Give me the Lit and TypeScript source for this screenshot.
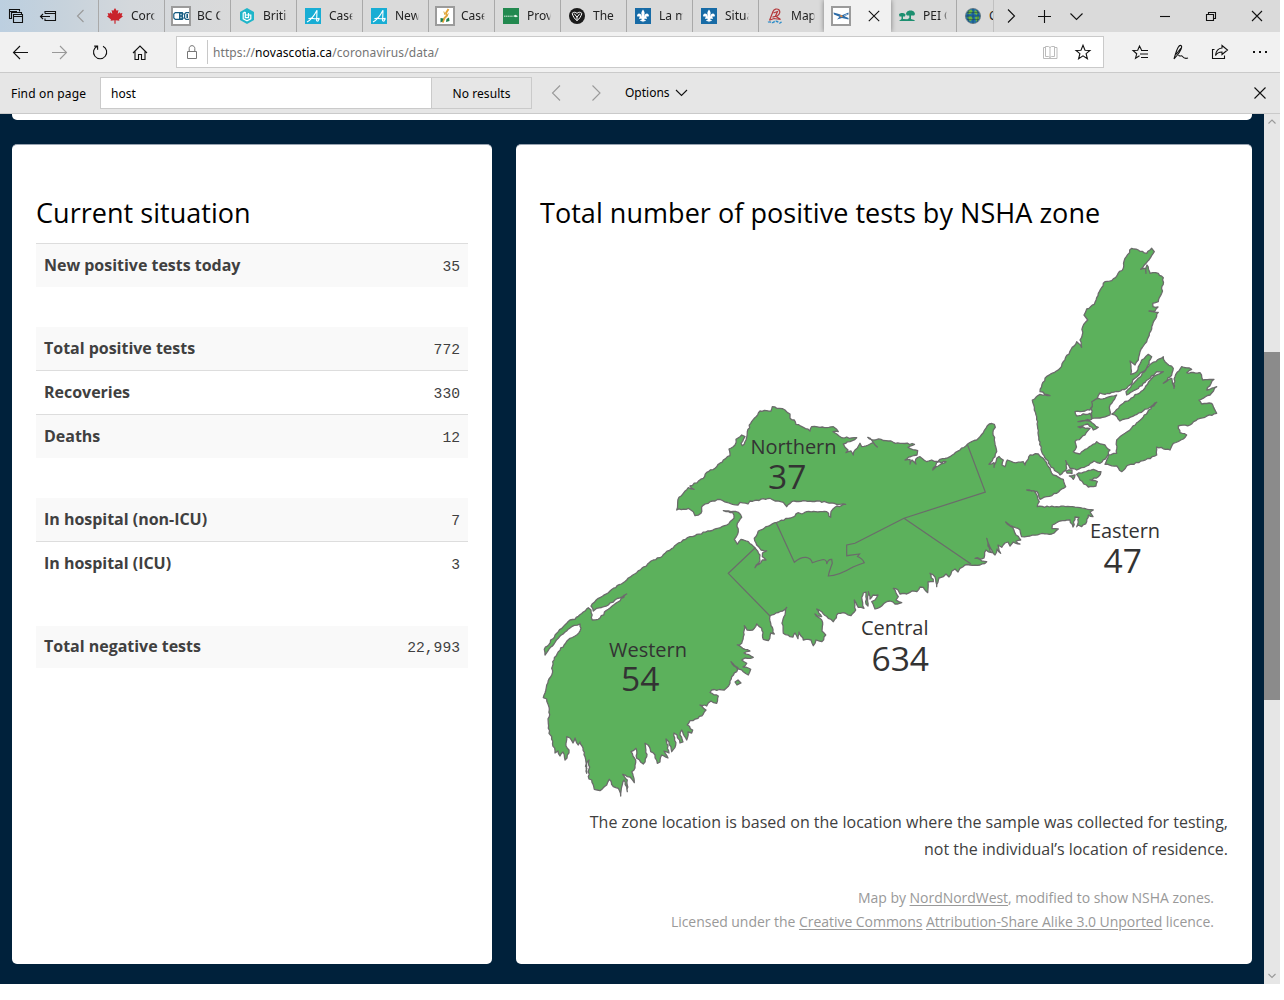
import { LitElement, html, svg, css, TemplateResult } from "lit";
import { customElement } from "lit/decorators.js";

type Pt = [number, number];

const parse = (s: string): Pt[] =>
  s.trim().split(/\s+/).map((p) => p.split(",").map(Number) as Pt);

/* Small deterministic displacement that gives the coast its ragged edge. */
function coast(src: string, seed: number): string {
  let s = seed;
  const rnd = () => {
    s = (s * 1103515245 + 12345) % 2147483648;
    return s / 2147483648 - 0.5;
  };
  const pts = parse(src);
  const out: Pt[] = [];
  pts.forEach((a, i) => {
    const b = pts[(i + 1) % pts.length];
    out.push(a);
    const dx = b[0] - a[0];
    const dy = b[1] - a[1];
    const len = Math.hypot(dx, dy);
    const n = Math.floor(len / 2.2);
    for (let k = 1; k < n; k++) {
      const t = k / n;
      const d = rnd() * 1.5;
      out.push([a[0] + dx * t - (dy / len) * d, a[1] + dy * t + (dx / len) * d]);
    }
  });
  return "M" + out.map((p) => p[0].toFixed(1) + " " + p[1].toFixed(1)).join("L") + "Z";
}

const MAINLAND = `676.7,510 679,497.3 683.3,493.3 688.3,487.7 694,489.3 690,486 703.3,478.3 706.7,472.3 715,468.3 723.3,460
730,455.7 729,449 735,445 736,439.3 741.7,435 745,436.7 741,443.3 742.3,445.7 746,440 747.3,431.7 750.7,423.3 760,411 771,411 772.3,406.7
776.7,408.3 785,410 790,414 790,418.3 794.3,420 796,424.3 803.3,427.3 810,431 811.7,426.7 820,427.3 833.3,426.7 836.7,429.3 838.3,431.7
833,431.7 836.7,434 841.7,437.7 856.7,437.7 850,441.7 843.3,444 845,447.3 848,450 846,452.7 851,451 853.3,455 855,450 860,443.3 861.7,446.7
868.3,445 873.3,442.7 877.3,447 872,440.7 867.7,437.3 871.7,439.7 881,439.3 893.3,442.3 900,443.3 914.5,444.3 908,447.3 917.7,450.7 917,455
911,456.5 905,460 910,459.5 910,464 912,460 916,464 915.7,459.3 920,456.7 926.7,461.7 931.7,460 937,461.5 932.7,470 938.3,466 946,461.7
937,462.5 940,459.3 950,456.7 960,450 967.3,444.3 976.7,440 983.3,432.7 989.3,424 994.3,424.3 995.3,427.3 993.3,430 994.3,440 996.7,451.7
995,456.7 989,464.3 994,462.5 994,467.3 996.7,458.3 999,456.5 1003.3,460 1002,465 1005,466.7 1007.3,460 1013.3,462.3 1023.3,461.7 1025,465 1030,455
1038.3,454 1043.3,458.3 1050,468.3 1053.3,475 1063.3,479.3 1065.7,486.7 1056.7,493.3 1046.7,496.7 1040,499.3 1037,491.5 1026.7,490 1034,490.7
1037.3,496 1039.3,501.7 1037.3,506.7 1056.7,506.7 1070,506.7 1080,507.7 1093.3,510 1090,512 1093,516.7 1088.3,515 1086.7,521.7 1081.7,526.7 1078,525 1076.7,526.7
1079,517.3 1075,517 1073,527 1070,520 1060,521 1052.3,525 1052,528.5 1058.3,529 1051.7,534 1040,534 1030,536 1021.7,536.7 1020,530 1013,526.7
1005.7,522 1012.7,527.5 1016,535 1020.7,540 1016,541 1020,544 1013.3,542 1010,546 1008,542 1005,543 1001.7,547.3 998,545 1000.7,553.3 997,549 995,555 990,547 986.7,538.3
988,546 991.7,552.7 986,550 984,558 975,558.3 986.7,561.7 980,565 970,565 965,565 960,568.3 958,572 955,569 951.7,571.3 949,577 946,574 943.3,576.7 939,578 936.7,586.7
935,577 930,573.3 933.3,581.7 928,582 927.7,592.7 923.3,587.3 920,587 916.7,591.7 912,591 906.7,594 900,594 898,590 893.3,588.3 898.3,596.7
896,600 901.7,602.7 895,604 890,601 886.7,601.7 881.7,606 875,609 871.7,601.7 875,600 878,595 873,595 870,599 868.3,591.7 868,606 866,604 866,592 863.3,593 862,600 864,608.3
858.3,607.3 854.3,600 855.7,610 851,615.7 845,613 838.3,613.3 833.3,621.7 828.3,618.3 821.7,611.7 816.7,609 821.7,616.7 815,614 821.7,620 822.3,626.7 822,631 825.7,635
821.7,641.7 816,640 813.3,645.7 811,640 803.3,640 799,632 798,638.7 795,633 793,637 790,636.7 783.3,633.3 782,623.3 785,615 786.7,607.3 782.7,611
770,616 770.7,623.3 774.3,634 770.7,633 768.3,640.7 763.3,639.3 761.7,628.3 756.7,624 752.7,630 747,630 744.3,625.7 743.3,636.7 741.7,643.3
737.3,645 742.7,648.3 750,651 744,653 753.3,657.3 745,658 741.7,660 746.7,663.3 743,667 750.7,669.3 748.3,675 743.3,671.7 737.3,667.3
731,661.7 737.7,669.3 731.7,676.7 730,683.3 724.3,690 711.7,690 710,692.5 718.3,696 716.7,703.3 711,701 706.7,706 700,705 706,710 703.3,714
698,718.3 690,720.7 687.3,725 692.7,730 691.7,733 688,732 686.7,740 681.7,730 680,735 683,742 680,743 677,735 674,733 675.7,745 671.7,751.7 669,742
666,739 669,753 664,751 668,758 661.7,755 660,762 657.3,763.3 655,755 650.7,751.7 648,745 645,743.3 646.7,756.7 643.3,764 636.7,758.3 636,748.3
631,751.7 635.7,760 635,768 631.7,771.7 634.3,782.7 630,777 622.7,774.3 627.3,780 627.3,791.7 624,780 621.7,786.7 620.7,796 618.3,788.3
613.3,786.7 609.3,779.3 606.7,785 600,790.7 594.3,789.3 591.7,780 589,779 589,760 587,762 586.7,773.3 585,756.7 583,748 580,742 578.3,745 575,738 573,743
570,738 566.7,736.7 566,746 569,750 567,758 565,760 563,752 560,756 558,751 555,753 551.7,736.7 549,733.3 548.3,723.3 549.3,710 546.7,699 543.3,697.7
546.7,685 551.7,675 552.7,661.7 558.3,651.7 570,638.3 576.7,635 581,628.3 580,624 571.7,626.7 558.3,638.3 545,655 544.3,649.3 556.7,633.3
570,620 575,619.3 588.3,607.7 591,610 592.3,620 598.3,619.3 608.3,609.3 618.3,601.7 626.7,594 615,600 608.3,605 596.7,608.3 593.3,611
591,606 598.3,598.3 610,591 626.7,580 636.7,572.7 653.3,560 660,557.7 676.7,544.3 690,536.7 710,531 726.7,525 734,518.3 732.7,512.7
723.3,510.7 738.3,512.3 741.7,517.3 737.3,523.3 738.3,531.7 734.3,539.3 737.3,544.3 741,539.3 748.3,541.7 755,547.7 760,555 760,561
755,567.7 762.3,560 766,560 762.3,556.7 762.5,553 766.7,551 761,550 756.7,545 754.3,538.3 758.3,531 776.7,522.3 788.3,518.3 795,516 798,512.7
802,514 806.7,511.7 826.7,511.7 830.7,517.3 831,511.7 835,507.3 845.7,504.3 836.7,504.3 826.7,502.3 816.7,501 803.3,500.7 791.7,501.7
786.7,506.7 783.3,502.3 775,501 770,498.3 750,501 748,504 740,502.3 738,505 730,503.3 720,499.3 710,501.7 701.7,506.7 701,513.3 695,515.7 693.3,511.7
688.3,508.3`;

const CAPE_WEST = `1131.7,248.3 1138.3,250 1146.7,253.3 1151.7,248.3 1154.3,251.7 1146,263.3 1140.7,269.3 1146,268.3 1146,273.3
1147,265 1150,273.3 1158.3,273.3 1163.3,277.7 1161.7,293.3 1158.3,301.7 1152.7,303.3 1153,306.7 1158,307 1155,311 1149,311 1158.3,312.3
1151.7,326.7 1146.7,341.7 1140,351.7 1138.3,360 1135,365 1130,361 1131,368.3 1130.7,374.3 1136.7,371.7 1141.7,360 1148.3,354.3 1151.7,356.7
1146.7,368.3 1135,378.3 1126.7,388.3 1118.3,391.7 1105,394.3 1100,393 1095,402 1090,410 1075,411.7 1076.7,416 1090,413.3 1091.7,419.3
1078,421.7 1090,421 1098.3,427.3 1093.3,430 1088,424 1078,427 1090,428.3 1085,435 1075,441.7 1076.5,447 1073.3,451.7 1080,454 1096.7,441.7
1105,445 1110,450 1106.7,456.7 1100,463.3 1094,461 1086.7,466 1076.7,470 1070,468.3 1065.7,460.7 1066.7,468.3 1060,475 1050,465 1041.7,451.7
1038.3,435 1037.7,421.7 1034.3,410 1032.3,400 1040,394.3 1050,395.7 1040,391.7 1045,378.3 1060,368.3 1063.3,361.7 1076.7,341.7 1081.7,347.3
1080,340 1082.3,335 1082.7,326.7 1087.7,320 1084,315 1086.7,309 1094.3,304.3 1098.3,293.3 1105,281.7 1111.7,280.7 1123.3,268.3 1125,258.3`;

const CAPE_EAST = `1111.7,414 1123.3,403.3 1143.3,390 1153.3,376.7 1163.3,371.7 1156.7,371.7 1138.3,388.3 1126.7,395 1126,391.7
1136.7,380 1151.7,363.3 1163.3,356.7 1165,361.7 1173.3,368.3 1171.7,375 1163.3,383.3 1171.7,378.3 1174,388.3 1175,376.7 1181.7,366.7
1191.7,369.3 1186.7,372.7 1200,372.7 1202.7,380 1214,379.3 1206.7,390 1216.7,386.7 1210,395 1199,400 1201.7,404 1211.7,403.3 1216.7,413.3
1200,418.3 1190,425 1178.3,426 1180,432.7 1186.7,435 1183.3,439 1173.3,443.3 1170,450 1156.7,447 1156.7,455 1143.3,460.7 1126.7,466
1121.7,471.7 1116.7,466 1105,464.3 1108.3,455 1116.7,453.3 1116.7,440 1125,433.3 1138.3,421.7 1156.7,402.3 1143.3,410.7 1128.3,418.3
1120,421 1117,416.7`;

const ISLES = [
  "1091.7,401.7 1096,399 1105,398.3 1116.7,395 1112,403 1110,405 1110,415 1100,418 1091.7,418.3",
  "1076.7,474.3 1093.3,469.3 1101,471.7 1098.3,476.7 1090,480 1097.3,481.7 1096,486 1088.3,487 1080,480",
  "1069.3,476 1075,475 1073.3,479.3",
  "1066,471 1072,470 1072,473.5 1067,473",
  "735,682 738,680 741,683 737,685",
];

const COAST_PATHS = [coast(MAINLAND, 17), coast(CAPE_WEST, 5), coast(CAPE_EAST, 29), ...ISLES.map((p, i) => coast(p, 3 + i))];

const ZONE_LINES =
  "M755 548L728.3 573.3L770 616M776.3 523L794.3 562.3Q800 557 806 557.3Q811 558 812.3 562.7Q817 561 823.3 559.5Q827 560 826.7 564Q828 559 831.7 559.3L832.3 563.3Q829 572 828.3 576Q838 576 853 567Q860 564 864.3 562.7Q862 558 857.5 556.5L859.5 554L846.7 555.7L846.7 545L855 543.3L904 518.3L985.3 492L967.3 444.3M904 518.3L971 564";

interface Label { name: string; value: string; nx: number; ny: number; nw: number; vx: number; vy: number; vw: number }
const LABELS: Label[] = [
  { name: "Northern", value: "37", nx: 750.5, ny: 454, nw: 86, vx: 768, vy: 489, vw: 38.5 },
  { name: "Eastern", value: "47", nx: 1090, ny: 538, nw: 70, vx: 1103.5, vy: 573, vw: 38.5 },
  { name: "Central", value: "634", nx: 861, ny: 635, nw: 67.5, vx: 871.5, vy: 671, vw: 57.5 },
  { name: "Western", value: "54", nx: 609, ny: 657, nw: 78, vx: 621, vy: 691, vw: 38.5 },
];

const icon = (size: number, body: TemplateResult, cls = "") =>
  html`<svg class="ic ${cls}" width=${size} height=${size} viewBox="0 0 ${size} ${size}">${body}</svg>`;

const fleur = svg`<rect width="16" height="16" fill="#176ba6"/>
  <path fill="#fff" d="M8 1.5C9.6 3.6 10 5 9.3 7.2L9 9C9.6 6.5 11 5.3 12.6 5.7C14.3 6.2 14.4 8.4 12.8 9C12.9 7.9 11.6 7.7 11 9.6H12V10.8H9.3C9.5 12.5 10.5 12.8 11 11.8C11.3 13.3 9.6 13.6 8.8 12.9L8 14.6L7.2 12.9C6.4 13.6 4.7 13.3 5 11.8C5.5 12.8 6.5 12.5 6.7 10.8H4V9.6H5C4.4 7.7 3.1 7.9 3.2 9C1.6 8.4 1.7 6.2 3.4 5.7C5 5.3 6.4 6.5 7 9L6.7 7.2C6 5 6.4 3.6 8 1.5Z"/>`;
const alberta = svg`<rect width="16" height="16" fill="#18add4"/>
  <path fill="none" stroke="#fff" stroke-width="1.1" d="M2 14C6 12 10 6 12 2.2L11.6 13.2M3.4 10.8C6 9 9 11.8 14.5 10.4M12.5 13.6L14.5 10.5"/>`;
const frame = svg`<rect x="1" y="1" width="18" height="18" fill="#fff" stroke="#9b9b9b" stroke-width="2"/>`;

interface Tab { label: string; size: number; art: TemplateResult }
const TABS: Tab[] = [
  { label: "Coronavirus", size: 16, art: svg`<path fill="#c9232b" d="M8 0L9.7 2.8L11.4 2L10.7 6L12.6 4.3L13.2 5.4L15.4 5L14.6 7.5L16 8.2L12 11.4L12.4 12.8L8.6 12.2V15.8H7.4V12.2L3.6 12.8L4 11.4L0 8.2L1.4 7.5L.6 5L2.8 5.4L3.4 4.3L5.3 6L4.6 2L6.3 2.8Z"/>` },
  { label: "BC COVID", size: 20, art: svg`${frame}<path fill="none" stroke="#175d82" stroke-width="1.2" d="M8 6.6H4.3L2.8 8V12L4.3 13.4H8M18 6.6H15L13.6 8V12L15 13.4H18"/><path fill="#175d82" d="M8 6H11.6L12.8 7.8L11.8 10L12.8 12.2L11.6 14H8Z"/><path d="M9.4 7.8H10.6V9.2H9.4ZM9.4 10.8H10.6V12.2H9.4Z" fill="#dfeef5"/><path fill="#175d82" d="M15.4 8H17V12H15.4Z"/>` },
  { label: "British", size: 16, art: svg`<path fill="#1fb5c9" d="M8 0L15 4V12L8 16L1 12V4Z"/><path fill="none" stroke="#fff" stroke-width="1.2" d="M6.3 4L4.2 5.2V10.8L8 12.8L11.8 10.8V7H6.3M6.3 4V9.6H9.5V5"/>` },
  { label: "Cases in", size: 16, art: alberta },
  { label: "News", size: 16, art: alberta },
  { label: "Cases and", size: 20, art: svg`${frame}<path stroke="#e5a63a" stroke-width="2" fill="none" d="M13.5 3L11 7L12 9.5L9.5 12L7.5 16.5"/><path fill="#1e7d4b" d="M5.5 12L8.5 12.5L7.5 15.5L5.5 16.5ZM11.5 13L14 11.5L14.5 15L11 16Z"/><path stroke="#d8aa40" d="M8.8 5.5L10 9M13.5 7.5L11 11"/>` },
  { label: "Province", size: 16, art: svg`<rect width="16" height="16" fill="#22894f"/><path stroke="#d5eadb" stroke-width="1" stroke-dasharray="1.4 .4" d="M1 8.2H10"/><path fill="#e9f4ec" d="M10.5 7.8L12.5 6.8L15 8.2L13 9.2L10.5 8.6Z"/>` },
  { label: "The 201", size: 16, art: svg`<circle cx="8" cy="8" r="8" fill="#1b1b1b"/><path fill="none" stroke="#fff" stroke-width="1" d="M3.2 5.3C4.5 3.9 6.6 3.9 8 5.4C9.4 3.9 11.5 3.9 12.8 5.3C12.3 7.8 10.6 10.8 8 12.7C5.4 10.8 3.7 7.8 3.2 5.3ZM5.2 5.6L8 9.2L10.8 5.6M8 9V12"/>` },
  { label: "La maladie", size: 16, art: fleur },
  { label: "Situation", size: 16, art: fleur },
  { label: "Map of", size: 16, art: svg`<path fill="none" stroke="#b5393c" stroke-width="1.2" d="M2.5 12.5L6 3.5C7 1 10 .3 12 1.8C13.8 4 12.5 6 10.5 7.8L5.5 9.2M6.5 5L10.5 3.5L8.5 8L13.5 11.5L7 10.5L3 12"/><path fill="none" stroke="#2e8dc8" stroke-width="1.4" stroke-dasharray="3 1" d="M1 14.3C3 12.8 4.5 15.6 6.5 14.2S10 13 11.5 14.5S13.5 14.5 14.5 14"/>` },
];

const chev = (d: string, w = 16, h = 16, cls = "") =>
  html`<svg class="ic ${cls}" width=${w} height=${h} viewBox="0 0 ${w} ${h}"><path d=${d} /></svg>`;

interface Row { label: string; value: string }
const GROUPS: { cls: string; rows: Row[] }[] = [
  { cls: "first", rows: [{ label: "New positive tests today", value: "35" }] },
  { cls: "", rows: [{ label: "Total positive tests", value: "772" }, { label: "Recoveries", value: "330" }, { label: "Deaths", value: "12" }] },
  { cls: "", rows: [{ label: "In hospital (non-ICU)", value: "7" }, { label: "In hospital (ICU)", value: "3" }] },
  { cls: "last", rows: [{ label: "Total negative tests", value: "22,993" }] },
];

@customElement("zone-map")
export class ZoneMap extends LitElement {
  static styles = css`
    :host { display: block; height: 565px; }
    .map { display: block; overflow: visible; font-family: "Open Sans", sans-serif; }
    .land { fill: #5cb15c; stroke: #6b6b6b; stroke-width: 1.3; stroke-linejoin: round; }
    .zones { fill: none; stroke: #6b6b6b; stroke-width: 1.2; }
    .name { font-size: 20px; fill: #333; }
    .value { font-size: 33.6px; fill: #333; }
  `;
  render() {
    return html`<svg class="map" width="688" height="565" viewBox="540 240 688 565">
      ${COAST_PATHS.map((d) => svg`<path class="land" d=${d} />`)}
      <path class="zones" d=${ZONE_LINES} />
      ${LABELS.map((l) => svg`
        <text class="name" x=${l.nx} y=${l.ny} textLength=${l.nw}>${l.name}</text>
        <text class="value" x=${l.vx} y=${l.vy} textLength=${l.vw}>${l.value}</text>`)}
    </svg>`;
  }
}

@customElement("app-root")
export class AppRoot extends LitElement {
  static styles = css`
    :host { display: block; width: 1284px; height: 1000px; background: #fff; overflow: hidden; }
    * { box-sizing: border-box; }
    .window { width: 1280px; height: 984px; display: flex; flex-direction: column; overflow: hidden; font-family: "Noto Sans", "Open Sans", sans-serif; font-size: 12px; color: #000; }
    .ic { display: block; flex: none; fill: none; stroke: none; overflow: visible; }
    .ln { stroke: #111; stroke-width: 1.1; }
    .dim { stroke: #999; stroke-width: 1.1; }
    .tabs { height: 32px; flex: none; display: flex; background: linear-gradient(90deg, #bccfe0 0, #c6d2dc 60px, #d4d8dc 130px, #dadada 240px); }
    .lead { width: 98px; flex: none; display: flex; align-items: center; padding-left: 8px; gap: 16px; }
    .tab { width: 66px; flex: none; display: flex; align-items: center; border-left: 1px solid #a9a9a9; overflow: hidden; }
    .tab .slot { width: 32px; flex: none; display: flex; justify-content: center; }
    .tab .cap { width: 24px; overflow: hidden; white-space: nowrap; font-size: 12px; line-height: 20px; color: #222; -webkit-mask-image: linear-gradient(90deg, #000 21px, transparent); mask-image: linear-gradient(90deg, #000 21px, transparent); }
    .tab.active { width: 67px; background: #f1f1f1; border-left: 0; padding-left: 7px; gap: 15px; box-shadow: 0 0 5px rgba(0, 0, 0, .45); }
    .tab.plain { border-left: 0; width: 65px; }
    .tab.cut { width: 37px; }
    .tab.cut .cap { width: 4px; -webkit-mask-image: none; mask-image: none; }
    .strip { flex: 1; display: flex; align-items: center; border-left: 1px solid #c0c0c0; padding-left: 9px; }
    .strip .grp { display: flex; gap: 17px; }
    .strip .win { display: flex; gap: 30px; margin-left: auto; padding-right: 15px; }
    .nav { height: 41px; flex: none; display: flex; align-items: center; background: #f1f1f1; border-bottom: 1px solid #cacaca; padding-left: 12px; }
    .nav .left { display: flex; gap: 24px; width: 164px; }
    .addr { width: 928px; height: 32px; display: flex; align-items: center; background: #fff; border: 1px solid #cacaca; padding-left: 7px; }
    .addr .url { margin-left: 7px; padding-left: 5px; border-left: 1px solid #c8c8c8; height: 24px; line-height: 25px; color: #757575; flex: 1; letter-spacing: .09px; }
    .addr .url b { color: #000; font-weight: 400; }
    .addr .marks { display: flex; gap: 17px; padding-right: 12px; }
    .nav .right { display: flex; gap: 24px; margin-left: 28px; }
    .find { height: 41px; flex: none; display: flex; align-items: center; background: #e6e6e6; border-bottom: 1px solid #cacaca; padding-left: 11px; }
    .find .tag { width: 89px; letter-spacing: .15px; }
    .find .field { width: 332px; height: 32px; background: #fff; border: 1px solid #cacaca; line-height: 32px; padding-left: 10px; }
    .find .none { width: 100px; height: 32px; border: 1px solid #cacaca; border-left: 0; line-height: 31px; text-align: center; letter-spacing: .08px; }
    .find .step { display: flex; gap: 24px; margin-left: 16px; width: 77px; }
    .find .opt { display: flex; align-items: center; gap: 5px; padding-bottom: 2px; }
    .find .end { margin-left: auto; padding-right: 12px; }
    .body { flex: 1; display: flex; min-height: 0; }
    .page { flex: 1; background: #00213b; padding: 0 12px; font-family: "Open Sans", sans-serif; color: #404040; overflow: hidden; }
    .upper { height: 6px; background: #fff; border-radius: 0 0 5px 5px; margin-bottom: 24px; }
    .cols { display: flex; gap: 24px; height: 820px; }
    .card { background: #fff; border-radius: 5px; border-top: 1px solid #98a3b0; padding: 47px 24px 0; }
    .card.a { width: 480px; }
    .card.b { width: 736px; }
    .title { margin: 0; height: 51px; line-height: 42px; font-size: 27px; font-weight: 400; color: #000; white-space: nowrap; }
    .a .title { letter-spacing: .03px; }
    .groups { display: flex; flex-direction: column; gap: 40px; }
    .row { display: flex; justify-content: space-between; align-items: center; height: 44px; padding: 0 8px; border-top: 1px solid #ddd; font-size: 16px; }
    .group:not(.first) .row:first-child { border-top: 0; height: 43px; }
    .row:nth-child(odd) { background: #f9f9f9; }
    .last { margin-top: 1px; }
    .group.last .row:first-child { height: 42px; }
    .row b { font-weight: 700; padding-bottom: 2px; letter-spacing: -.02px; }
    .row span { font-family: "Liberation Mono", monospace; font-size: 14.67px; padding-top: 2px; }
    .b .title { height: 48px; letter-spacing: .045px; }
    .note { margin: 4px 0 0; text-align: right; font-size: 16px; line-height: 27px; white-space: nowrap; }
    .credit { margin: 23px 14px 0 0; text-align: right; font-size: 14px; line-height: 24px; color: #999; white-space: nowrap; letter-spacing: -.038px; }
    .credit u { text-underline-offset: 2px; }
    .bar { width: 16px; flex: none; background: #e6e6e6; display: flex; flex-direction: column; align-items: center; }
    .thumb { width: 16px; height: 348px; background: #8b8b8b; margin-top: 222px; margin-bottom: auto; }
  `;

  private tab(t: Tab) {
    return html`<div class="tab"><div class="slot">${icon(t.size, t.art)}</div><div class="cap">${t.label}</div></div>`;
  }

  private chrome() {
    return html`
      <div class="tabs">
        <div class="lead">
          ${icon(16, svg`<path d="M3.5 10.5H1.5V1.5H11.5V3.5M1.5 3.5H9M3.5 11V4.5H13.5V6M5.5 6.5H14.5V14.5H5.5ZM5.5 8.5H14.5"/>`, "ln")}
          ${icon(16, svg`<path d="M5 5.5V3.5H15.5V12.5H5V10.5M5 5.5H15.5M.5 8.5H10M3 6L.5 8.5L3 11"/>`, "ln")}
          ${icon(16, svg`<path d="M11.5 2L5.5 8L11.5 14"/>`, "dim")}
        </div>
        ${TABS.map((t) => this.tab(t))}
        <div class="tab active">
          ${icon(20, svg`${frame}<path fill="#2d6ca8" d="M2.5 6.5L8 8L11 9.2L17.5 6.5V8.5L13.5 10.3L17.5 12V13.5L11 12L6 13.5L8.5 10.8L3 8.5Z"/><path fill="#fff" d="M13 9.2L16.5 8V8.6L13.5 9.8Z"/><path fill="#e38b43" d="M8.5 9.5L10.5 9L12 10.7L10 11.2Z"/>`)}
          ${chev("M2.8 2.8L13.2 13.2M13.2 2.8L2.8 13.2", 16, 16, "ln")}
        </div>
        <div class="tab plain"><div class="slot">${icon(16, svg`<path fill="#1d8f70" d="M0 6.5C.5 4.5 5.5 4.5 6.5 6.5L6 8.5H4V11L8.5 11.3L10.3 10V7.5H8C6.5 6.5 7 4.5 8 4C8.5 2 14.5 2 15 4C16.5 5 16 7.5 14.5 7.6L12 7.6V11C14 11.5 15.5 12 16 13H0L2.5 11V8.5L.5 8.4Z"/>`)}</div><div class="cap">PEI COVID</div></div>
        <div class="tab cut"><div class="slot">${icon(16, svg`<circle cx="8" cy="8" r="7.6" fill="#2270a8" stroke="#6c7c83" stroke-width=".8"/><path fill="#69b33e" d="M3 3L6 1.5L8 3.5L5.5 6L2.5 6ZM10 2L13.5 4.5L11.5 7L9 5ZM2 9L6 8L8 11L5 13.5ZM10 9L14 8L14 11L11 14Z"/><path stroke="#183b52" stroke-width=".5" d="M8 .5V15.5M.5 8H15.5M4 2C2.5 6 2.5 10 4 14M12 2C13.5 6 13.5 10 12 14M2 4.5H14M2 11.5H14"/>`)}</div><div class="cap">COVID</div></div>
        <div class="strip">
          <div class="grp">
            ${chev("M5 1.5L11.5 8L5 14.5", 16, 16, "ln")}
            ${chev("M8.5 2V15M2 8.5H15", 16, 16, "ln")}
            ${chev("M1.5 5.5L7.5 11.5L13.5 5.5", 16, 16, "ln")}
          </div>
          <div class="win">
            ${chev("M3 8.5H13", 16, 16, "ln")}
            ${chev("M3.5 6.5H10.5V12.5H3.5ZM5.5 6.5V4.5H12.5V10.5H10.5", 16, 16, "ln")}
            ${chev("M3 3L13 13M13 3L3 13", 16, 16, "ln")}
          </div>
        </div>
      </div>
      <div class="nav">
        <div class="left">
          ${chev("M1.5 8.5H16M8 2L1.5 8.5L8 15", 16, 16, "ln")}
          ${chev("M0 8.5H14.5M8 2L14.5 8.5L8 15", 16, 16, "dim")}
          ${chev("M5.2 2.2A6.6 6.6 0 1 0 11 2.2M5.6 5.7V2.1H2.2", 16, 16, "ln")}
          ${chev("M1 9L8 2L15 9M3 7.5V15.5H6.5V10.5H9.5V15.5H13V7.5", 16, 16, "ln")}
        </div>
        <div class="addr">
          <svg class="ic" width="16" height="16" viewBox="0 0 16 16"><path stroke="#777" d="M3.5 7.5H12.5V14.5H3.5ZM5.2 7.5V4.5C5.2 .7 10.8 .7 10.8 4.5V7.5"/></svg>
          <div class="url">https://<b>novascotia.ca</b>/coronavirus/data/</div>
          <div class="marks">
            <svg class="ic" width="16" height="16" viewBox="0 0 16 16"><path stroke="#bbb" d="M8 3V13.5M8 3.5L6.5 2.5H3.5V12.5H6.5L8 13.5L9.5 12.5H12.5V2.5H9.5ZM3.5 3.5H1.5V14.5H15V3.5H12.5"/></svg>
            ${chev("M8 1.2L10 6.2L15 6.4L11.1 9.7L12.4 14.8L8 11.9L3.6 14.8L4.9 9.7L1 6.4L6 6.2Z", 16, 16, "ln")}
          </div>
        </div>
        <div class="right">
          ${chev("M9.5 6L7.5 2L5.7 6.3L1 6.5L4.7 9.8L3.5 14.3L7.5 11.8M9 6.5H16M8 10H16M9 13.5H16", 16, 16, "ln")}
          ${chev("M2 15L3.5 10C5 5 7 .5 9 1.5C11 2.5 8 8 5 11.5L2 15M4 10.5L9 4M6.5 11C8 13.5 9 10.5 10.5 12.5C12 14.5 13 15 16 14", 16, 16, "ln")}
          ${chev("M2.5 5.5H.5V14.5H12.5V11.5M10 1.5L15.5 6L10 10.5V8C7 8 5 9 3.5 11.5C4 7 6.5 4.2 10 4Z", 16, 16, "ln")}
          <svg class="ic" width="16" height="16" viewBox="0 0 16 16"><path fill="#111" d="M1 7H3V9H1ZM7 7H9V9H7ZM13 7H15V9H13Z"/></svg>
        </div>
      </div>
      <div class="find">
        <div class="tag">Find on page</div>
        <div class="field">host</div>
        <div class="none">No results</div>
        <div class="step">
          ${chev("M12 .5L4.5 8L12 15.5", 16, 16, "dim")}
          ${chev("M4.5 .5L12 8L4.5 15.5", 16, 16, "dim")}
        </div>
        <div class="opt">Options ${chev("M1 4L6.5 9.5L12 4", 12, 12, "ln")}</div>
        <div class="end">${chev("M2.5 2.5L13.5 13.5M13.5 2.5L2.5 13.5", 16, 16, "ln")}</div>
      </div>`;
  }

  render() {
    return html`<div class="window">
      ${this.chrome()}
      <div class="body">
        <div class="page">
          <div class="upper"></div>
          <div class="cols">
            <section class="card a">
              <h2 class="title">Current situation</h2>
              <div class="groups">
                ${GROUPS.map((g) => html`<div class="group ${g.cls}">
                  ${g.rows.map((r) => html`<div class="row"><b>${r.label}</b><span>${r.value}</span></div>`)}
                </div>`)}
              </div>
            </section>
            <section class="card b">
              <h2 class="title">Total number of positive tests by NSHA zone</h2>
              <zone-map></zone-map>
              <p class="note">The zone location is based on the location where the sample was collected for testing,<br />not the individual’s location of residence.</p>
              <p class="credit">Map by <u>NordNordWest</u>, modified to show NSHA zones.<br />Licensed under the <u>Creative Commons</u> <u>Attribution-Share Alike 3.0 Unported</u> licence.</p>
            </section>
          </div>
        </div>
        <div class="bar">
          ${chev("M4.5 9.5L8 6L11.5 9.5", 16, 16, "dim")}
          <div class="thumb"></div>
          ${chev("M4.5 6L8 9.5L11.5 6", 16, 16, "dim")}
        </div>
      </div>
    </div>`;
  }
}
